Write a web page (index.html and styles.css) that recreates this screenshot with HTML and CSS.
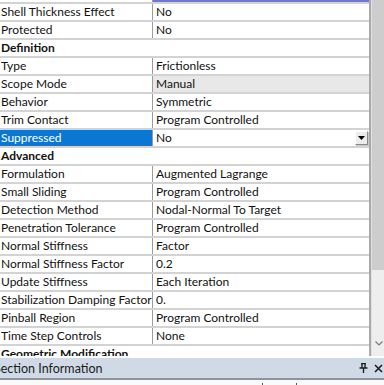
FILE: index.html
```html
<!DOCTYPE html>
<html lang="en">
<head>
    <meta charset="UTF-8">
    <meta name="viewport" content="width=device-width, initial-scale=1.0">
    <title>Details of Contact Region</title>
    <link rel="stylesheet" href="styles.css">
</head>
<body>
    <div class="details">
        <div class="props">
            <div class="table">
                <div class="row partial">
                    <div class="name"></div>
                    <div class="value focused"></div>
                </div>
                <div class="row"><div class="name">Shell Thickness Effect</div><div class="value">No</div></div>
                <div class="row"><div class="name">Protected</div><div class="value">No</div></div>
                <div class="row group"><div class="name">Definition</div></div>
                <div class="row"><div class="name">Type</div><div class="value">Frictionless</div></div>
                <div class="row"><div class="name">Scope Mode</div><div class="value readonly">Manual</div></div>
                <div class="row"><div class="name">Behavior</div><div class="value">Symmetric</div></div>
                <div class="row"><div class="name">Trim Contact</div><div class="value">Program Controlled</div></div>
                <div class="row selected">
                    <div class="name">Suppressed</div>
                    <div class="value combo">
                        <span>No</span>
                        <span class="drop-btn">
                            <svg width="7" height="4" viewBox="0 0 7 4"><path d="M0 0h7L3.5 4z" fill="#000"/></svg>
                        </span>
                    </div>
                </div>
                <div class="row group"><div class="name">Advanced</div></div>
                <div class="row"><div class="name">Formulation</div><div class="value">Augmented Lagrange</div></div>
                <div class="row"><div class="name">Small Sliding</div><div class="value">Program Controlled</div></div>
                <div class="row"><div class="name">Detection Method</div><div class="value">Nodal-Normal To Target</div></div>
                <div class="row"><div class="name">Penetration Tolerance</div><div class="value">Program Controlled</div></div>
                <div class="row"><div class="name">Normal Stiffness</div><div class="value">Factor</div></div>
                <div class="row"><div class="name">Normal Stiffness Factor</div><div class="value">0.2</div></div>
                <div class="row"><div class="name">Update Stiffness</div><div class="value">Each Iteration</div></div>
                <div class="row"><div class="name">Stabilization Damping Factor</div><div class="value">0.</div></div>
                <div class="row"><div class="name">Pinball Region</div><div class="value">Program Controlled</div></div>
                <div class="row"><div class="name">Time Step Controls</div><div class="value">None</div></div>
                <div class="row group"><div class="name">Geometric Modification</div></div>
            </div>
            <div class="scrollbar">
                <div class="thumb"></div>
                <div class="track">
                    <svg class="arrow" width="8" height="5" viewBox="0 0 8 5"><path d="M0.5 0.5L4 4L7.5 0.5" fill="none" stroke="#7a7a7a" stroke-width="1.2"/></svg>
                </div>
            </div>
        </div>
        <div class="panel-head">
            <span class="title">Section Information</span>
            <span class="tools">
                <svg width="9" height="10" viewBox="0 0 9 10"><path d="M2 0.5h5M3 0.5v4.5M6 0.5v4.5M0.5 5h8M4.5 5v5" fill="none" stroke="#1e1e1e" stroke-width="1.4"/></svg>
                <svg width="9" height="9" viewBox="0 0 9 9"><path d="M1 1L8 8M8 1L1 8" fill="none" stroke="#1e1e1e" stroke-width="1.6"/></svg>
            </span>
        </div>
        <div class="panel-body">
            <span class="tick"></span>
            <span class="tick"></span>
        </div>
    </div>
</body>
</html>
```

FILE: styles.css
```css
* {
    margin: 0;
    padding: 0;
    box-sizing: border-box;
}

body {
    font-family: Lato, "Noto Sans", sans-serif;
    font-size: 12px;
    color: #111;
    background: #fff;
    width: 384px;
    height: 385px;
    overflow: hidden;
}

.details {
    display: flex;
    flex-direction: column;
    width: 384px;
    height: 385px;
}

.props {
    display: flex;
    height: 356px;
    overflow: hidden;
    flex-shrink: 0;
}

.table {
    width: 371px;
    border-right: 2px solid #a9a9a9;
}

.row {
    display: grid;
    grid-template-columns: 153px 1fr;
    height: 18px;
    border-top: 2px solid #d3d3d3;
    line-height: 16px;
    white-space: nowrap;
}

.row .name {
    padding-left: 1px;
    border-right: 1px solid #9c9c9c;
    overflow: hidden;
}

.row .value {
    padding-left: 3px;
    overflow: hidden;
}

.row.partial {
    height: 2px;
    border-top: none;
}

.value.focused {
    background: #6e74e2;
}

.value.readonly {
    background: #e8e8e8;
}

.row.group {
    grid-template-columns: 1fr;
    font-weight: bold;
}

.row.group .name {
    border-right: none;
}

.row.selected .name {
    background: #0a77d5;
    color: #fff;
}

.value.combo {
    display: flex;
    justify-content: space-between;
    align-items: center;
    padding-right: 1px;
}

.drop-btn {
    display: flex;
    align-items: center;
    justify-content: center;
    width: 13px;
    height: 14px;
    background: #ececec;
    border: 1px solid;
    border-color: #fff #8a8a8a #8a8a8a #fff;
    box-shadow: 1px 1px 0 #c9c9c9;
}

.scrollbar {
    display: flex;
    flex-direction: column;
    flex: 1;
    border-left: 1px solid #e2e2e2;
}

.thumb {
    height: 270px;
    background: #cdcdcd;
}

.track {
    flex: 1;
    background: #eeeeee;
    display: flex;
    justify-content: center;
    padding-top: 71px;
    padding-left: 2px;
}

.arrow {
    display: block;
}

.panel-head {
    display: flex;
    align-items: center;
    justify-content: space-between;
    height: 22px;
    margin-top: 2px;
    background: #d0dae6;
    border-bottom: 2px solid #8e949b;
    overflow: hidden;
}

.title {
    font-size: 12.5px;
    margin-left: -6px;
    color: #1a1a1a;
}

.tools {
    display: flex;
    align-items: center;
    gap: 6px;
    padding-right: 1px;
}

.tools svg {
    display: block;
}

.panel-body {
    flex: 1;
    display: flex;
    gap: 33px;
    padding-left: 262px;
    padding-top: 3px;
    background: #fafafa;
}

.tick {
    width: 1px;
    height: 2px;
    background: #555;
}
```
